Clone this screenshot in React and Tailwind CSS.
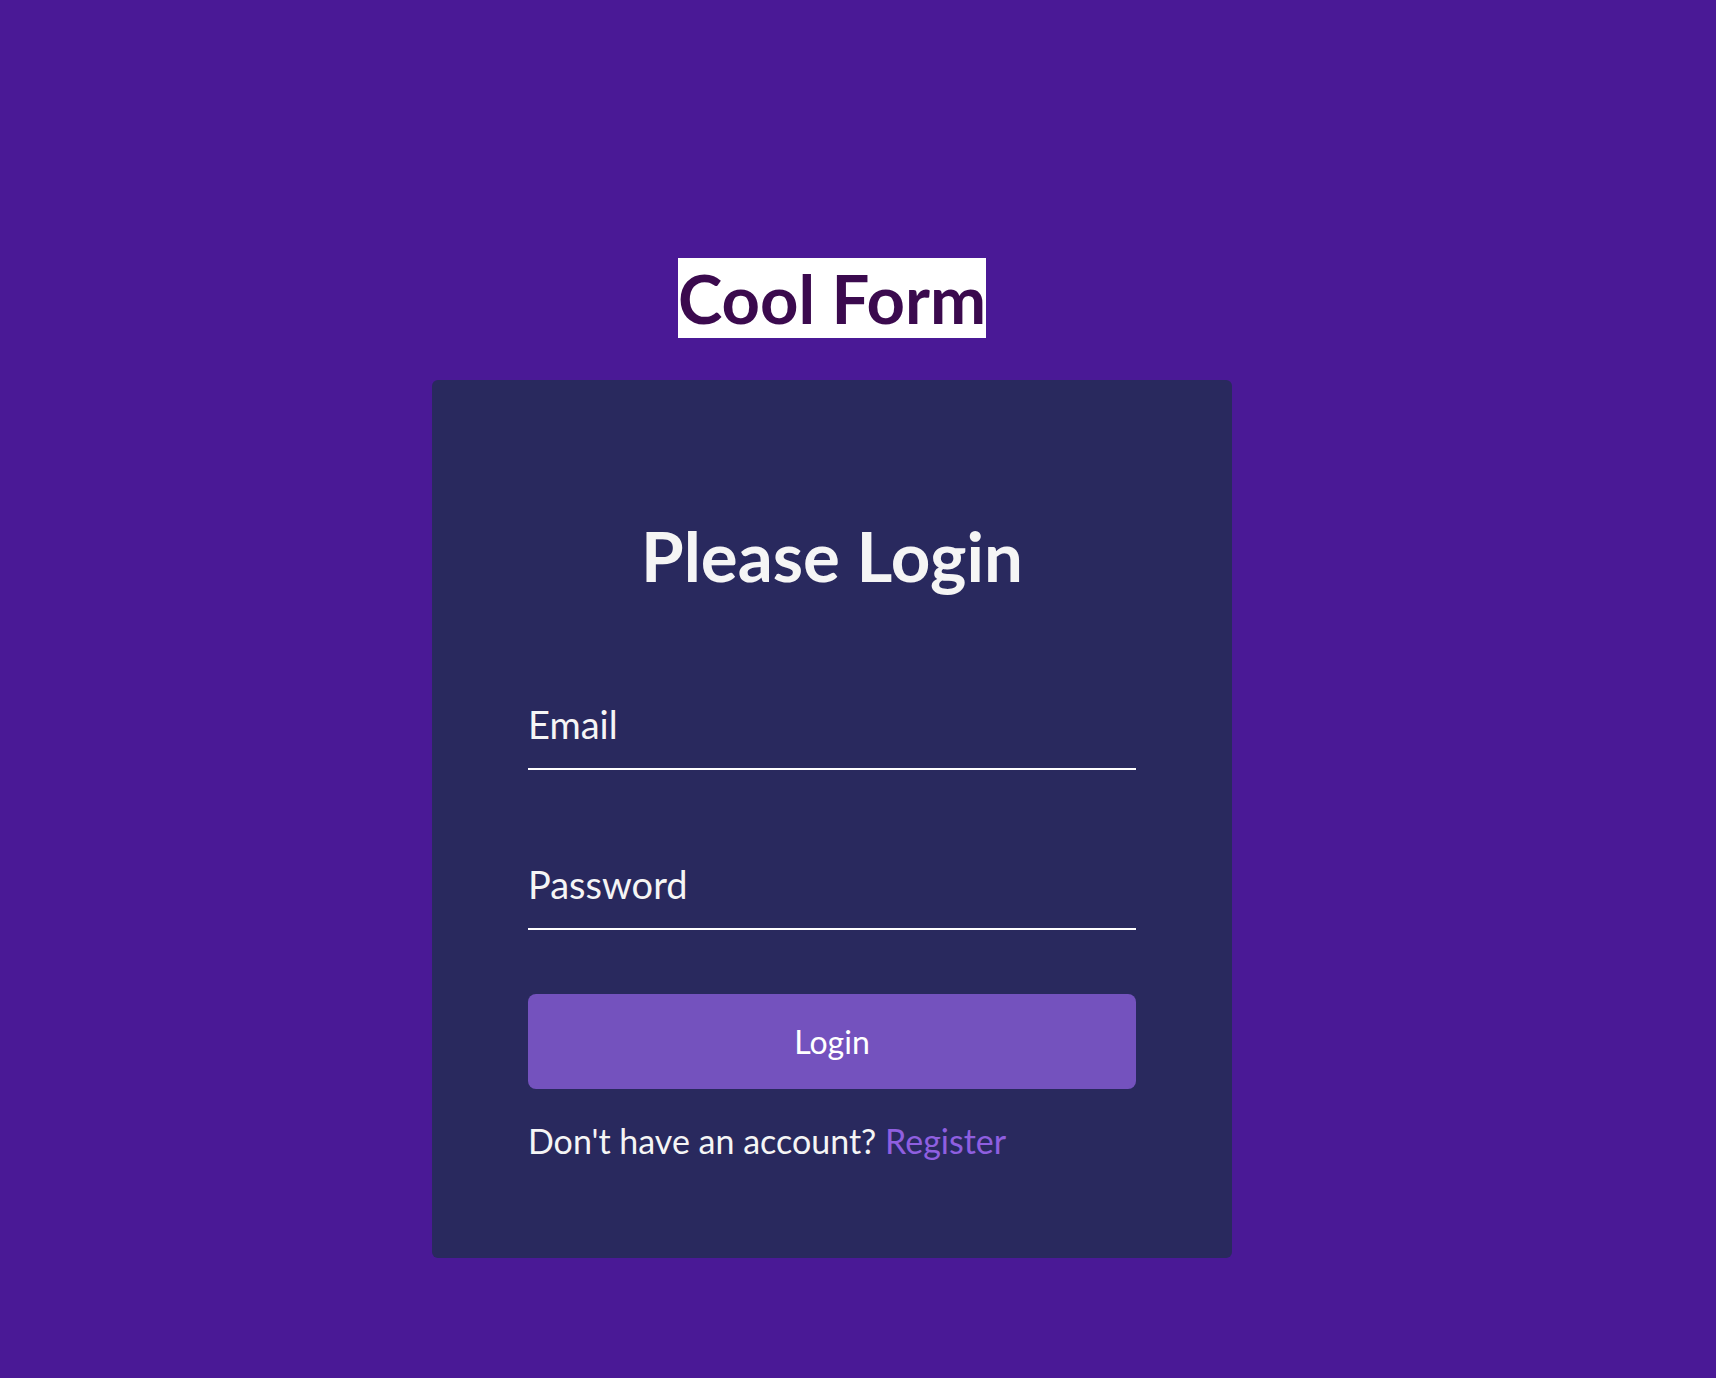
import React from 'react';

const App = () => {
  return (
    <div className="min-h-screen w-full bg-[#4a1996] font-['Lato','Open_Sans',sans-serif]">
      <div className="flex flex-col items-center pr-[52px] pt-[258px] pb-[60px]">
        {/* Title */}
        <h1 className="flex h-[80px] w-[308px] items-center justify-center whitespace-nowrap bg-white text-[67px] font-bold leading-none text-[#3b0a4e]">
          Cool Form
        </h1>

        {/* Card */}
        <form
          className="mt-[42px] flex w-[800px] flex-col rounded-[6px] bg-[#29295e] px-[96px] pt-[141px] pb-[100px]"
          onSubmit={(e) => e.preventDefault()}
        >
          <h2 className="text-center text-[69px] font-bold leading-none text-[#f5f5f5]">
            Please Login
          </h2>

          <input
            type="email"
            placeholder="Email"
            className="mt-[116px] h-[64px] w-full border-b-2 border-white bg-transparent pb-[27px] text-[38px] leading-none text-white outline-none placeholder:text-[#f5f5f5]"
          />

          <input
            type="password"
            placeholder="Password"
            className="mt-[96px] h-[64px] w-full border-b-2 border-white bg-transparent pb-[27px] text-[38px] leading-none text-white outline-none placeholder:text-[#f5f5f5]"
          />

          <button
            type="submit"
            className="mt-[64px] flex h-[95px] w-full items-center justify-center rounded-[8px] bg-[#7452be] text-[32px] leading-none text-white"
          >
            Login
          </button>

          <p className="mt-[35px] text-[34px] leading-none text-[#f5f5f5]">
            Don't have an account?{' '}
            <a href="#" className="text-[#8f5fe0]">
              Register
            </a>
          </p>
        </form>
      </div>
    </div>
  );
};

export default App;
